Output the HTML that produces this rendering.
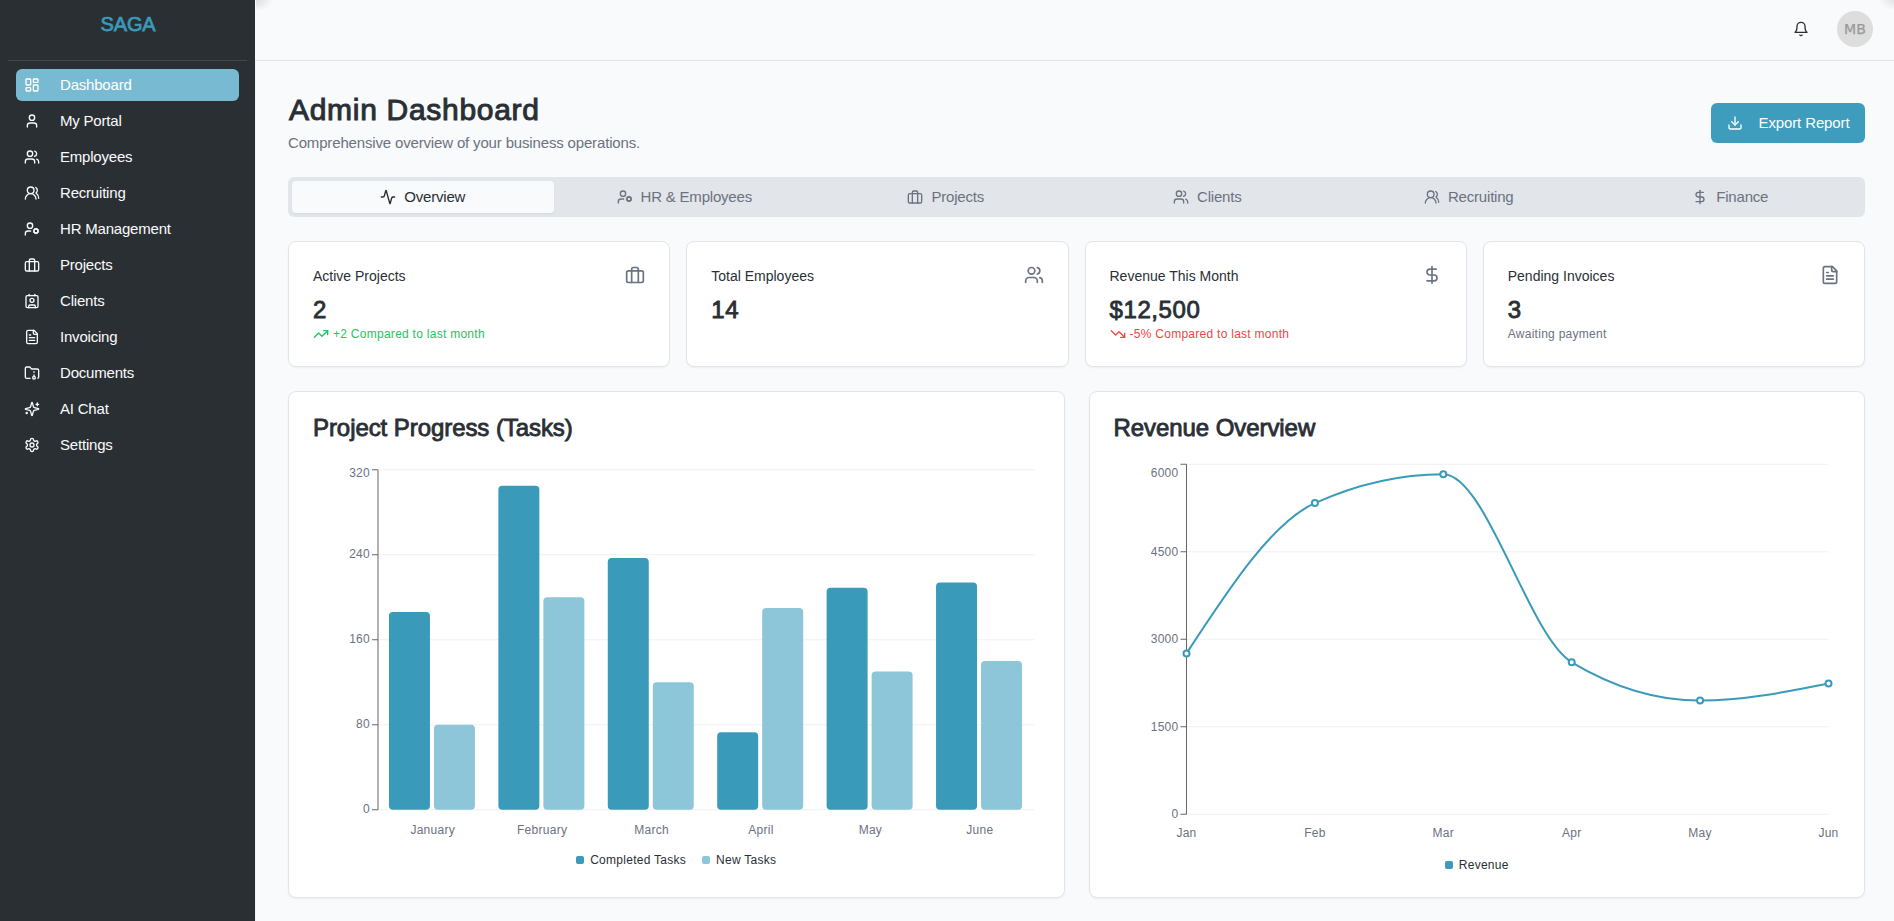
<!DOCTYPE html>
<html lang="en">
<head>
<meta charset="utf-8">
<title>SAGA - Admin Dashboard</title>
<style>
*{box-sizing:border-box}
html,body{margin:0;padding:0}
body{width:1894px;height:921px;overflow:hidden;background:#f9fafb;font-family:"Liberation Sans",sans-serif;color:#2a2f35;position:relative}
.ic{display:block;flex:none}
/* sidebar */
.side{position:absolute;left:0;top:0;width:256px;height:921px;background:#2a2f34;border-right:1px solid #f0f2f4}
.brand{height:60px;display:flex;align-items:flex-start;justify-content:center;font-weight:400;-webkit-text-stroke:.75px #3a9ab9;font-size:20px;color:#3a9ab9;padding-top:12px;line-height:24px;width:256px;letter-spacing:-.2px}
.sep{position:absolute;left:8px;top:60px;width:239px;height:1px;background:#43484e}
.navs{position:absolute;left:16px;top:69px;width:223px}
.nav{display:flex;align-items:center;height:32px;margin-bottom:4px;padding-left:8px;border-radius:6px;color:#fafbfc;font-size:15px;text-decoration:none}
.nav .ic{margin-right:20px}
.nav span{position:relative;top:-1px;letter-spacing:-.2px}
.nav.active{background:#78bad2;color:#fff}
/* header */
.corner{position:absolute;top:0;width:17px;height:11px;pointer-events:none}
.corner.tl{left:256px;background:radial-gradient(ellipse at 0 0,rgba(60,64,70,.16),rgba(60,64,70,0) 72%)}
.corner.tr{right:0;background:radial-gradient(ellipse at 100% 0,rgba(60,64,70,.12),rgba(60,64,70,0) 65%)}
.top{position:absolute;left:255px;top:0;right:0;height:61px;border-bottom:1px solid #e1e4e8;background:#f9fafb}
.bell{position:absolute;left:1793px;top:21px;color:#2a2f35}
.avatar{position:absolute;left:1837px;top:11px;width:36px;height:36px;border-radius:50%;background:#dddddd;color:#999;font-size:14px;display:flex;align-items:center;justify-content:center;font-family:"DejaVu Sans","Liberation Sans",sans-serif;letter-spacing:.2px;-webkit-text-stroke:.25px #999}
/* page head */
h1{position:absolute;left:289px;top:92px;margin:0;font-size:30px;line-height:36px;font-weight:400;-webkit-text-stroke:1px #2a2f35;letter-spacing:.7px;color:#2a2f35;white-space:nowrap}
.sub{position:absolute;left:288px;top:132px;margin:0;font-size:15px;line-height:22px;color:#6b7280;white-space:nowrap;letter-spacing:-.16px}
.export{position:absolute;left:1711px;top:103px;width:154px;height:40px;border:0;border-radius:6px;background:#3e9dbc;color:#fff;font:inherit;font-size:15px;display:flex;align-items:center;padding:0 0 0 16px}
.export .ic{margin-right:15px}
.export span{letter-spacing:-.12px;position:relative;top:-1px;left:.5px}
/* tabs */
.tabs{position:absolute;left:288px;top:177px;width:1577px;height:40px;background:#e2e5ea;border-radius:6px;padding:4px;display:grid;grid-template-columns:repeat(6,1fr)}
.tab{border:0;background:transparent;font:inherit;font-size:15px;color:#6b7280;display:flex;align-items:center;justify-content:center;border-radius:4px;padding:0;height:32px}
.tab .ic{margin-right:8px}
.tab span{letter-spacing:-.2px;position:relative;top:-1px}
.tab.on{background:#f9fafb;color:#2a2f35;box-shadow:0 1px 2px rgba(0,0,0,.06)}
/* cards */
.card{position:absolute;background:#fff;border:1px solid #e2e5e9;border-radius:8px;box-shadow:0 1px 2px rgba(0,0,0,.05)}
.stat{top:241px;width:382.25px;height:126px;padding:24px}
.stat .hd{margin-top:-1px;display:flex;justify-content:space-between;align-items:center;height:20px;font-size:14px;line-height:20px;color:#2a2f35}
.stat .hd .ic{color:#6b7280}
.stat .hd span{position:relative;top:.5px}
.stat .val{margin-top:9px;font-size:24px;line-height:32px;font-weight:400;-webkit-text-stroke:.86px #2a2f35;letter-spacing:.6px;color:#2a2f35}
.stat .note{font-size:12px;line-height:16px;display:flex;align-items:center;color:#6b7280;letter-spacing:.27px}
.stat .note .ic{margin-right:4px}
.up{color:#22c55e!important} .down{color:#ef4444!important}
.chart{top:391px;width:776.5px;height:507px}
.chart h3{position:absolute;left:24px;top:23.5px;margin:0;font-size:24px;line-height:24px;font-weight:400;-webkit-text-stroke:.86px #2a2f35;letter-spacing:-.07px;color:#2a2f35;white-space:nowrap}
svg.plot{position:absolute;left:-1px;top:-1px;width:776.5px;height:507px;pointer-events:none;overflow:visible}
.tk{font-size:12px;letter-spacing:.27px;fill:#6b7280;font-family:"Liberation Sans",sans-serif}
.legend{position:absolute;left:24px;width:726.5px;display:flex;align-items:center;justify-content:center;letter-spacing:.27px;font-size:12px;line-height:16px;color:#2a2f35;white-space:nowrap}
.legend i{display:block;width:8px;height:8px;border-radius:2px;margin-right:6px}
.legend span{display:flex;align-items:center}
.legend span+span{margin-left:16px}
</style>
</head>
<body>
<aside class="side">
  <div class="brand">SAGA</div>
  <div class="sep"></div>
  <nav class="navs">
<a class="nav active"><svg class="ic " width="16" height="16" viewBox="0 0 24 24" fill="none" stroke="currentColor" stroke-width="2" stroke-linecap="round" stroke-linejoin="round" style=""><rect width="7" height="9" x="3" y="3" rx="1"/><rect width="7" height="5" x="14" y="3" rx="1"/><rect width="7" height="9" x="14" y="12" rx="1"/><rect width="7" height="5" x="3" y="16" rx="1"/></svg><span>Dashboard</span></a>
<a class="nav"><svg class="ic " width="16" height="16" viewBox="0 0 24 24" fill="none" stroke="currentColor" stroke-width="2" stroke-linecap="round" stroke-linejoin="round" style=""><path d="M19 21v-2a4 4 0 0 0-4-4H9a4 4 0 0 0-4 4v2"/><circle cx="12" cy="7" r="4"/></svg><span>My Portal</span></a>
<a class="nav"><svg class="ic " width="16" height="16" viewBox="0 0 24 24" fill="none" stroke="currentColor" stroke-width="2" stroke-linecap="round" stroke-linejoin="round" style=""><path d="M16 21v-2a4 4 0 0 0-4-4H6a4 4 0 0 0-4 4v2"/><circle cx="9" cy="7" r="4"/><path d="M22 21v-2a4 4 0 0 0-3-3.87"/><path d="M16 3.13a4 4 0 0 1 0 7.75"/></svg><span>Employees</span></a>
<a class="nav"><svg class="ic " width="16" height="16" viewBox="0 0 24 24" fill="none" stroke="currentColor" stroke-width="2" stroke-linecap="round" stroke-linejoin="round" style=""><path d="M18 21a8 8 0 0 0-16 0"/><circle cx="10" cy="8" r="5"/><path d="M22 20c0-3.37-2-6.5-4-8a5 5 0 0 0-.45-8.3"/></svg><span>Recruiting</span></a>
<a class="nav"><svg class="ic " width="16" height="16" viewBox="0 0 24 24" fill="none" stroke="currentColor" stroke-width="2" stroke-linecap="round" stroke-linejoin="round" style=""><circle cx="18" cy="15" r="3"/><circle cx="9" cy="7" r="4"/><path d="M10 15H6a4 4 0 0 0-4 4v2"/><path d="m21.7 16.4-.9-.3"/><path d="m15.2 13.9-.9-.3"/><path d="m16.6 18.7.3-.9"/><path d="m19.1 12.2.3-.9"/><path d="m19.6 18.7-.4-1"/><path d="m16.8 12.3-.4-1"/><path d="m14.3 16.6 1-.4"/><path d="m20.7 13.8 1-.4"/></svg><span>HR Management</span></a>
<a class="nav"><svg class="ic " width="16" height="16" viewBox="0 0 24 24" fill="none" stroke="currentColor" stroke-width="2" stroke-linecap="round" stroke-linejoin="round" style=""><rect width="20" height="14" x="2" y="7" rx="2" ry="2"/><path d="M16 21V5a2 2 0 0 0-2-2h-4a2 2 0 0 0-2 2v16"/></svg><span>Projects</span></a>
<a class="nav"><svg class="ic " width="16" height="16" viewBox="0 0 24 24" fill="none" stroke="currentColor" stroke-width="2" stroke-linecap="round" stroke-linejoin="round" style=""><path d="M16 2v2"/><path d="M7 22v-2a2 2 0 0 1 2-2h6a2 2 0 0 1 2 2v2"/><path d="M8 2v2"/><circle cx="12" cy="11" r="3"/><rect x="3" y="4" width="18" height="18" rx="2"/></svg><span>Clients</span></a>
<a class="nav"><svg class="ic " width="16" height="16" viewBox="0 0 24 24" fill="none" stroke="currentColor" stroke-width="2" stroke-linecap="round" stroke-linejoin="round" style=""><path d="M15 2H6a2 2 0 0 0-2 2v16a2 2 0 0 0 2 2h12a2 2 0 0 0 2-2V7Z"/><path d="M14 2v4a2 2 0 0 0 2 2h4"/><path d="M10 9H8"/><path d="M16 13H8"/><path d="M16 17H8"/></svg><span>Invoicing</span></a>
<a class="nav"><svg class="ic " width="16" height="16" viewBox="0 0 24 24" fill="none" stroke="currentColor" stroke-width="2" stroke-linecap="round" stroke-linejoin="round" style=""><circle cx="15" cy="19" r="2"/><path d="M20.9 19.8A2 2 0 0 0 22 18V8a2 2 0 0 0-2-2h-7.9a2 2 0 0 1-1.69-.9L9.6 3.9A2 2 0 0 0 7.93 3H4a2 2 0 0 0-2 2v13a2 2 0 0 0 2 2h5.1"/><path d="M15 11v-1"/><path d="M15 17v-2"/></svg><span>Documents</span></a>
<a class="nav"><svg class="ic " width="16" height="16" viewBox="0 0 24 24" fill="none" stroke="currentColor" stroke-width="2" stroke-linecap="round" stroke-linejoin="round" style=""><path d="M9.937 15.5A2 2 0 0 0 8.5 14.063l-6.135-1.582a.5.5 0 0 1 0-.962L8.5 9.936A2 2 0 0 0 9.937 8.5l1.582-6.135a.5.5 0 0 1 .963 0L14.063 8.5A2 2 0 0 0 15.5 9.937l6.135 1.581a.5.5 0 0 1 0 .964L15.5 14.063a2 2 0 0 0-1.437 1.437l-1.582 6.135a.5.5 0 0 1-.963 0z"/><path d="M20 3v4"/><path d="M22 5h-4"/><path d="M4 17v2"/><path d="M5 18H3"/></svg><span>AI Chat</span></a>
<a class="nav"><svg class="ic " width="16" height="16" viewBox="0 0 24 24" fill="none" stroke="currentColor" stroke-width="2" stroke-linecap="round" stroke-linejoin="round" style=""><path d="M12.22 2h-.44a2 2 0 0 0-2 2v.18a2 2 0 0 1-1 1.73l-.43.25a2 2 0 0 1-2 0l-.15-.08a2 2 0 0 0-2.73.73l-.22.38a2 2 0 0 0 .73 2.73l.15.1a2 2 0 0 1 1 1.72v.51a2 2 0 0 1-1 1.74l-.15.09a2 2 0 0 0-.73 2.73l.22.38a2 2 0 0 0 2.73.73l.15-.08a2 2 0 0 1 2 0l.43.25a2 2 0 0 1 1 1.73V20a2 2 0 0 0 2 2h.44a2 2 0 0 0 2-2v-.18a2 2 0 0 1 1-1.73l.43-.25a2 2 0 0 1 2 0l.15.08a2 2 0 0 0 2.73-.73l.22-.39a2 2 0 0 0-.73-2.73l-.15-.08a2 2 0 0 1-1-1.74v-.5a2 2 0 0 1 1-1.74l.15-.09a2 2 0 0 0 .73-2.73l-.22-.38a2 2 0 0 0-2.73-.73l-.15.08a2 2 0 0 1-2 0l-.43-.25a2 2 0 0 1-1-1.73V4a2 2 0 0 0-2-2z"/><circle cx="12" cy="12" r="3"/></svg><span>Settings</span></a>
  </nav>
</aside>
<header class="top"></header>
<div class="corner tl"></div><div class="corner tr"></div>
<div class="bell"><svg class="ic " width="16" height="16" viewBox="0 0 24 24" fill="none" stroke="currentColor" stroke-width="2" stroke-linecap="round" stroke-linejoin="round" style=""><path d="M6 8a6 6 0 0 1 12 0c0 7 3 9 3 9H3s3-2 3-9"/><path d="M10.3 21a1.94 1.94 0 0 0 3.4 0"/></svg></div>
<div class="avatar">MB</div>

<h1>Admin Dashboard</h1>
<p class="sub">Comprehensive overview of your business operations.</p>
<button class="export"><svg class="ic " width="16" height="16" viewBox="0 0 24 24" fill="none" stroke="currentColor" stroke-width="2" stroke-linecap="round" stroke-linejoin="round" style=""><path d="M21 15v4a2 2 0 0 1-2 2H5a2 2 0 0 1-2-2v-4"/><polyline points="7 10 12 15 17 10"/><line x1="12" x2="12" y1="15" y2="3"/></svg><span>Export Report</span></button>

<div class="tabs">
<button class="tab on"><svg class="ic " width="16" height="16" viewBox="0 0 24 24" fill="none" stroke="currentColor" stroke-width="2" stroke-linecap="round" stroke-linejoin="round" style=""><path d="M22 12h-2.48a2 2 0 0 0-1.93 1.46l-2.35 8.36a.25.25 0 0 1-.48 0L9.24 2.18a.25.25 0 0 0-.48 0l-2.35 8.36A2 2 0 0 1 4.49 12H2"/></svg><span>Overview</span></button>
<button class="tab"><svg class="ic " width="16" height="16" viewBox="0 0 24 24" fill="none" stroke="currentColor" stroke-width="2" stroke-linecap="round" stroke-linejoin="round" style=""><circle cx="18" cy="15" r="3"/><circle cx="9" cy="7" r="4"/><path d="M10 15H6a4 4 0 0 0-4 4v2"/><path d="m21.7 16.4-.9-.3"/><path d="m15.2 13.9-.9-.3"/><path d="m16.6 18.7.3-.9"/><path d="m19.1 12.2.3-.9"/><path d="m19.6 18.7-.4-1"/><path d="m16.8 12.3-.4-1"/><path d="m14.3 16.6 1-.4"/><path d="m20.7 13.8 1-.4"/></svg><span>HR &amp; Employees</span></button>
<button class="tab"><svg class="ic " width="16" height="16" viewBox="0 0 24 24" fill="none" stroke="currentColor" stroke-width="2" stroke-linecap="round" stroke-linejoin="round" style=""><rect width="20" height="14" x="2" y="7" rx="2" ry="2"/><path d="M16 21V5a2 2 0 0 0-2-2h-4a2 2 0 0 0-2 2v16"/></svg><span>Projects</span></button>
<button class="tab"><svg class="ic " width="16" height="16" viewBox="0 0 24 24" fill="none" stroke="currentColor" stroke-width="2" stroke-linecap="round" stroke-linejoin="round" style=""><path d="M16 21v-2a4 4 0 0 0-4-4H6a4 4 0 0 0-4 4v2"/><circle cx="9" cy="7" r="4"/><path d="M22 21v-2a4 4 0 0 0-3-3.87"/><path d="M16 3.13a4 4 0 0 1 0 7.75"/></svg><span>Clients</span></button>
<button class="tab"><svg class="ic " width="16" height="16" viewBox="0 0 24 24" fill="none" stroke="currentColor" stroke-width="2" stroke-linecap="round" stroke-linejoin="round" style=""><path d="M18 21a8 8 0 0 0-16 0"/><circle cx="10" cy="8" r="5"/><path d="M22 20c0-3.37-2-6.5-4-8a5 5 0 0 0-.45-8.3"/></svg><span>Recruiting</span></button>
<button class="tab"><svg class="ic " width="16" height="16" viewBox="0 0 24 24" fill="none" stroke="currentColor" stroke-width="2" stroke-linecap="round" stroke-linejoin="round" style=""><line x1="12" x2="12" y1="2" y2="22"/><path d="M17 5H9.5a3.5 3.5 0 0 0 0 7h5a3.5 3.5 0 0 1 0 7H6"/></svg><span>Finance</span></button>
</div>

<section class="card stat" style="left:288px">
  <div class="hd"><span>Active Projects</span><svg class="ic " width="20" height="20" viewBox="0 0 24 24" fill="none" stroke="currentColor" stroke-width="2" stroke-linecap="round" stroke-linejoin="round" style=""><rect width="20" height="14" x="2" y="7" rx="2" ry="2"/><path d="M16 21V5a2 2 0 0 0-2-2h-4a2 2 0 0 0-2 2v16"/></svg></div>
  <div class="val">2</div>
  <div class="note up"><svg class="ic " width="16" height="16" viewBox="0 0 24 24" fill="none" stroke="currentColor" stroke-width="2" stroke-linecap="round" stroke-linejoin="round" style=""><polyline points="22 7 13.5 15.5 8.5 10.5 2 17"/><polyline points="16 7 22 7 22 13"/></svg><span>+2 Compared to last month</span></div>
</section>
<section class="card stat" style="left:686.25px">
  <div class="hd"><span>Total Employees</span><svg class="ic " width="20" height="20" viewBox="0 0 24 24" fill="none" stroke="currentColor" stroke-width="2" stroke-linecap="round" stroke-linejoin="round" style=""><path d="M16 21v-2a4 4 0 0 0-4-4H6a4 4 0 0 0-4 4v2"/><circle cx="9" cy="7" r="4"/><path d="M22 21v-2a4 4 0 0 0-3-3.87"/><path d="M16 3.13a4 4 0 0 1 0 7.75"/></svg></div>
  <div class="val">14</div>
</section>
<section class="card stat" style="left:1084.5px">
  <div class="hd"><span>Revenue This Month</span><svg class="ic " width="20" height="20" viewBox="0 0 24 24" fill="none" stroke="currentColor" stroke-width="2" stroke-linecap="round" stroke-linejoin="round" style=""><line x1="12" x2="12" y1="2" y2="22"/><path d="M17 5H9.5a3.5 3.5 0 0 0 0 7h5a3.5 3.5 0 0 1 0 7H6"/></svg></div>
  <div class="val">$12,500</div>
  <div class="note down"><svg class="ic " width="16" height="16" viewBox="0 0 24 24" fill="none" stroke="currentColor" stroke-width="2" stroke-linecap="round" stroke-linejoin="round" style=""><polyline points="22 17 13.5 8.5 8.5 13.5 2 7"/><polyline points="16 17 22 17 22 11"/></svg><span>-5% Compared to last month</span></div>
</section>
<section class="card stat" style="left:1482.75px">
  <div class="hd"><span>Pending Invoices</span><svg class="ic " width="20" height="20" viewBox="0 0 24 24" fill="none" stroke="currentColor" stroke-width="2" stroke-linecap="round" stroke-linejoin="round" style=""><path d="M15 2H6a2 2 0 0 0-2 2v16a2 2 0 0 0 2 2h12a2 2 0 0 0 2-2V7Z"/><path d="M14 2v4a2 2 0 0 0 2 2h4"/><path d="M10 9H8"/><path d="M16 13H8"/><path d="M16 17H8"/></svg></div>
  <div class="val">3</div>
  <div class="note"><span>Awaiting payment</span></div>
</section>

<section class="card chart" style="left:288px">
  <h3>Project Progress (Tasks)</h3>
  <svg class="plot" width="776.5" height="507" viewBox="288 391 776.5 507">
<line x1="378.0" y1="809.75" x2="1034.5" y2="809.75" stroke="#eff0f2" stroke-width="1"/>
<line x1="378.0" y1="724.75" x2="1034.5" y2="724.75" stroke="#eff0f2" stroke-width="1"/>
<line x1="378.0" y1="639.75" x2="1034.5" y2="639.75" stroke="#eff0f2" stroke-width="1"/>
<line x1="378.0" y1="554.75" x2="1034.5" y2="554.75" stroke="#eff0f2" stroke-width="1"/>
<line x1="378.0" y1="469.75" x2="1034.5" y2="469.75" stroke="#eff0f2" stroke-width="1"/>
<rect x="388.94" y="612.12" width="41" height="197.63" rx="4" ry="4" fill="#3a9ab9"/>
<rect x="433.94" y="724.75" width="41" height="85.00" rx="4" ry="4" fill="#8dc6d9"/>
<rect x="498.36" y="485.69" width="41" height="324.06" rx="4" ry="4" fill="#3a9ab9"/>
<rect x="543.36" y="597.25" width="41" height="212.50" rx="4" ry="4" fill="#8dc6d9"/>
<rect x="607.78" y="557.94" width="41" height="251.81" rx="4" ry="4" fill="#3a9ab9"/>
<rect x="652.78" y="682.25" width="41" height="127.50" rx="4" ry="4" fill="#8dc6d9"/>
<rect x="717.19" y="732.19" width="41" height="77.56" rx="4" ry="4" fill="#3a9ab9"/>
<rect x="762.19" y="607.88" width="41" height="201.88" rx="4" ry="4" fill="#8dc6d9"/>
<rect x="826.61" y="587.69" width="41" height="222.06" rx="4" ry="4" fill="#3a9ab9"/>
<rect x="871.61" y="671.62" width="41" height="138.12" rx="4" ry="4" fill="#8dc6d9"/>
<rect x="936.03" y="582.38" width="41" height="227.37" rx="4" ry="4" fill="#3a9ab9"/>
<rect x="981.03" y="661.00" width="41" height="148.75" rx="4" ry="4" fill="#8dc6d9"/>
<line x1="378.0" y1="469.75" x2="378.0" y2="809.75" stroke="#666" stroke-width="1"/>
<line x1="372.0" y1="809.75" x2="378.0" y2="809.75" stroke="#666" stroke-width="1"/>
<text x="370.0" y="813.35" text-anchor="end" class="tk">0</text>
<line x1="372.0" y1="724.75" x2="378.0" y2="724.75" stroke="#666" stroke-width="1"/>
<text x="370.0" y="728.35" text-anchor="end" class="tk">80</text>
<line x1="372.0" y1="639.75" x2="378.0" y2="639.75" stroke="#666" stroke-width="1"/>
<text x="370.0" y="643.35" text-anchor="end" class="tk">160</text>
<line x1="372.0" y1="554.75" x2="378.0" y2="554.75" stroke="#666" stroke-width="1"/>
<text x="370.0" y="558.35" text-anchor="end" class="tk">240</text>
<line x1="372.0" y1="469.75" x2="378.0" y2="469.75" stroke="#666" stroke-width="1"/>
<text x="370.0" y="476.65" text-anchor="end" class="tk">320</text>
<text x="432.71" y="833.8" text-anchor="middle" class="tk">January</text>
<text x="542.12" y="833.8" text-anchor="middle" class="tk">February</text>
<text x="651.54" y="833.8" text-anchor="middle" class="tk">March</text>
<text x="760.96" y="833.8" text-anchor="middle" class="tk">April</text>
<text x="870.38" y="833.8" text-anchor="middle" class="tk">May</text>
<text x="979.79" y="833.8" text-anchor="middle" class="tk">June</text>
  </svg>
  <div class="legend" style="top:460px"><span><i style="background:#3a9ab9"></i>Completed Tasks</span><span><i style="background:#8dc6d9"></i>New Tasks</span></div>
</section>
<section class="card chart" style="left:1088.5px">
  <h3>Revenue Overview</h3>
  <svg class="plot" width="776.5" height="507" viewBox="1088.5 391 776.5 507">
<line x1="1186.0" y1="814.25" x2="1828.0" y2="814.25" stroke="#eff0f2" stroke-width="1"/>
<line x1="1186.0" y1="726.75" x2="1828.0" y2="726.75" stroke="#eff0f2" stroke-width="1"/>
<line x1="1186.0" y1="639.25" x2="1828.0" y2="639.25" stroke="#eff0f2" stroke-width="1"/>
<line x1="1186.0" y1="551.75" x2="1828.0" y2="551.75" stroke="#eff0f2" stroke-width="1"/>
<line x1="1186.0" y1="464.25" x2="1828.0" y2="464.25" stroke="#eff0f2" stroke-width="1"/>
<line x1="1186.0" y1="464.25" x2="1186.0" y2="814.25" stroke="#666" stroke-width="1"/>
<line x1="1180.0" y1="814.25" x2="1186.0" y2="814.25" stroke="#666" stroke-width="1"/>
<text x="1178.0" y="818.05" text-anchor="end" class="tk">0</text>
<line x1="1180.0" y1="726.75" x2="1186.0" y2="726.75" stroke="#666" stroke-width="1"/>
<text x="1178.0" y="730.55" text-anchor="end" class="tk">1500</text>
<line x1="1180.0" y1="639.25" x2="1186.0" y2="639.25" stroke="#666" stroke-width="1"/>
<text x="1178.0" y="643.05" text-anchor="end" class="tk">3000</text>
<line x1="1180.0" y1="551.75" x2="1186.0" y2="551.75" stroke="#666" stroke-width="1"/>
<text x="1178.0" y="555.55" text-anchor="end" class="tk">4500</text>
<line x1="1180.0" y1="464.25" x2="1186.0" y2="464.25" stroke="#666" stroke-width="1"/>
<text x="1178.0" y="476.65" text-anchor="end" class="tk">6000</text>
<path d="M1186.00,653.40C1228.80,587.88,1271.60,522.37,1314.40,503.10C1357.20,483.83,1400.00,474.20,1442.80,474.20C1485.60,474.20,1528.40,636.77,1571.20,662.30C1614.00,687.83,1656.80,700.60,1699.60,700.60C1742.40,700.60,1785.20,692.05,1828.00,683.50" fill="none" stroke="#3a9ab9" stroke-width="2"/>
<circle cx="1186.00" cy="653.40" r="3" fill="#fff" stroke="#3a9ab9" stroke-width="2"/>
<circle cx="1314.40" cy="503.10" r="3" fill="#fff" stroke="#3a9ab9" stroke-width="2"/>
<circle cx="1442.80" cy="474.20" r="3" fill="#fff" stroke="#3a9ab9" stroke-width="2"/>
<circle cx="1571.20" cy="662.30" r="3" fill="#fff" stroke="#3a9ab9" stroke-width="2"/>
<circle cx="1699.60" cy="700.60" r="3" fill="#fff" stroke="#3a9ab9" stroke-width="2"/>
<circle cx="1828.00" cy="683.50" r="3" fill="#fff" stroke="#3a9ab9" stroke-width="2"/>
<text x="1186.00" y="836.6" text-anchor="middle" class="tk">Jan</text>
<text x="1314.40" y="836.6" text-anchor="middle" class="tk">Feb</text>
<text x="1442.80" y="836.6" text-anchor="middle" class="tk">Mar</text>
<text x="1571.20" y="836.6" text-anchor="middle" class="tk">Apr</text>
<text x="1699.60" y="836.6" text-anchor="middle" class="tk">May</text>
<text x="1828.00" y="836.6" text-anchor="middle" class="tk">Jun</text>
  </svg>
  <div class="legend" style="top:465px"><span><i style="background:#3a9ab9"></i>Revenue</span></div>
</section>
</body>
</html>
